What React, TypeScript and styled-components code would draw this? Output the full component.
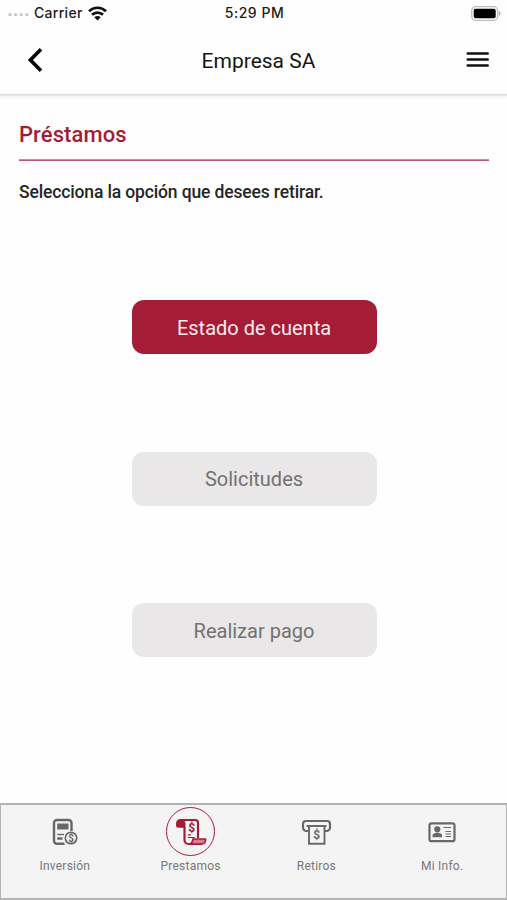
import React from "react";
import styled, { createGlobalStyle } from "styled-components";

const GlobalStyle = createGlobalStyle`
  * { box-sizing: border-box; }
  body { margin: 0; background: #fff; font-family: Roboto, sans-serif; }
`;

const Screen = styled.div`
  display: flex;
  flex-direction: column;
  width: 507px;
  height: 900px;
  overflow: hidden;
  background: #fefefe;
`;

const StatusBar = styled.div`
  display: grid;
  grid-template-columns: 1fr auto 1fr;
  align-items: center;
  height: 26px;
  padding: 0 6px 0 8px;
  font: 500 14px/26px Inter, sans-serif;
  color: #1c1c1c;
`;

const StatusSide = styled.div<{ $end?: boolean }>`
  display: flex;
  align-items: center;
  justify-content: ${(p) => (p.$end ? "flex-end" : "flex-start")};
`;

const Carrier = styled.span`
  margin: 0 5px 0 5px;
  letter-spacing: 0.3px;
`;

const Clock = styled.span`
  letter-spacing: 0.5px;
`;

const Header = styled.header`
  display: grid;
  grid-template-columns: 1fr auto 1fr;
  align-items: center;
  height: 68px;
  flex: none;
  padding: 0 17px 0 27px;
  box-shadow: 0 1px 0 #dcdcdc, 0 2px 0 #e4e4e4, 0 4px 3px rgba(0, 0, 0, 0.05);
`;

const IconButton = styled.button<{ $end?: boolean }>`
  display: flex;
  justify-self: ${(p) => (p.$end ? "end" : "start")};
  padding: 0;
  border: 0;
  background: none;
`;

const HeaderTitle = styled.h1`
  margin: 1px 0 0;
  font-size: 21px;
  font-weight: 400;
  line-height: 24px;
  color: #161616;
`;

const Content = styled.main`
  flex: 1;
  padding: 26px 18px 0 19px;
`;

const SectionTitle = styled.h2`
  margin: 0;
  padding-top: 1px;
  font-size: 22px;
  font-weight: 500;
  line-height: 28px;
  letter-spacing: 0.08px;
  color: #a31c38;
`;

const Rule = styled.div`
  height: 2px;
  margin-top: 10px;
  background: linear-gradient(#d0899a 50%, #bd5a70 50%);
`;

const Hint = styled.p`
  margin: 20px 0 0;
  font-size: 17.5px;
  font-weight: 500;
  line-height: 22px;
  letter-spacing: -0.14px;
  color: #262626;
`;

const Options = styled.div`
  display: flex;
  flex-direction: column;
  align-items: center;
  gap: 97.5px;
  margin-top: 97px;
`;

const OptionButton = styled.button<{ $primary?: boolean }>`
  width: 245px;
  height: 54px;
  padding: 1px 0 0;
  border: 0;
  border-radius: 12px;
  background: ${(p) => (p.$primary ? "#a51c36" : "#e9e7e8")};
  color: ${(p) => (p.$primary ? "#fbeaec" : "#727272")};
  font: 400 20px/24px Roboto, sans-serif;
`;

const TabBar = styled.nav`
  display: grid;
  grid-template-columns: repeat(4, 125.8px);
  justify-content: center;
  height: 97px;
  border: 2px solid #b2b2b2;
  border-left-width: 1px;
  border-right-width: 1px;
  background: #f4f4f4;
`;

const Tab = styled.a`
  display: flex;
  flex-direction: column;
  align-items: center;
  padding-top: 2px;
  font-size: 12px;
  line-height: 16px;
  letter-spacing: 0.22px;
  color: #777;
`;

const TabIcon = styled.span<{ $active?: boolean }>`
  display: flex;
  align-items: center;
  justify-content: center;
  width: 49px;
  height: 49px;
  margin-bottom: 2px;
  border: 1px solid ${(p) => (p.$active ? "#a51c36" : "transparent")};
  border-radius: 50%;
  color: ${(p) => (p.$active ? "#a51c36" : "#686868")};
`;

const Dollar = ({ x, y, size }: { x: number; y: number; size: number }) => (
  <text x={x} y={y} fontSize={size} fontWeight="700" fontFamily="Roboto, sans-serif" letterSpacing="0" textAnchor="middle" fill="currentColor">$</text>
);

const SignalDots = () => (
  <svg width="21" height="6" viewBox="0 0 21 6" fill="#c8c8c8">
    {[2, 7.6, 13.2, 18.8].map((x) => <circle key={x} cx={x} cy="5" r="1.7" transform="translate(0 -.3)" />)}
  </svg>
);

const WifiIcon = () => (
  <svg width="19" height="15" viewBox="0 0 19 15" fill="none" stroke="#111" strokeWidth="2.7">
    <path d="M1 5.200C5.800.6 13.200.6 18 5.200M4 8.800c3-3 8-3 11 0" />
    <path d="M6.300 11.300c1.800-1.600 4.600-1.600 6.400 0l-3.200 3.200z" fill="#111" stroke="none" />
  </svg>
);

const BatteryIcon = () => (
  <svg width="30" height="15" viewBox="0 0 30 15">
    <rect x=".7" y=".7" width="26" height="13.6" rx="4" fill="#fff" stroke="#bdbdbd" strokeWidth="1.3" />
    <rect x="2.7" y="2.8" width="22" height="9.4" rx="2" fill="#000" />
    <path d="M28 5.2c2 .7 2 3.9 0 4.6z" fill="#aaa" />
  </svg>
);

const BackIcon = () => (
  <svg width="16" height="24" viewBox="0 0 16 24" fill="none" stroke="#090909" strokeWidth="3.7">
    <path d="M14 1.3 3.4 12 14 22.7" />
  </svg>
);

const MenuIcon = () => (
  <svg width="24" height="18" viewBox="0 0 24 18" fill="none" stroke="#111" strokeWidth="2.5" strokeLinecap="round">
    <path d="M1.700 2.500h20M1.700 8.500h20M1.700 14.500h20" />
  </svg>
);

const InvestIcon = () => (
  <svg width="26" height="28" viewBox="0 0 26 28" fill="none" stroke="currentColor">
    <path d="M12.500 25.700H5a3 3 0 0 1-3-3V5a3 3 0 0 1 3-3h11.500a3 3 0 0 1 3 3v8" strokeWidth="2.400" />
    <path d="M5.200 5.500h11.300v6H5.200z" fill="currentColor" stroke="none" />
    <path d="M5.200 16.500H12" strokeWidth="1.400" />
    <path d="M5.200 20.500h5.300" strokeWidth="2.500" />
    <circle cx="19" cy="20" r="5.700" strokeWidth="1.700" />
    <g stroke="none"><Dollar x={19} y={23.5} size={10} /></g>
  </svg>
);

const LoanIcon = () => (
  <svg width="32" height="28" viewBox="0 0 32 28" fill="none" stroke="currentColor" strokeWidth="2.200">
    <path d="M4.500 2H20a3 3 0 0 1 3 3v15" />
    <path d="M9.500 9v13a4 4 0 0 0 4 4h13" />
    <path d="M1 5.500a4.500 4.500 0 0 1 4.500-4.500H9l1.500 4.500v4.300h-7A2.500 2.500 0 0 1 1 7.300z" fill="currentColor" stroke="none" />
    <path d="M14.500 26c2.500 0 3-2.500 3.500-5h12.500c.5 3-1 5-3.600 5z" fill="#cf8292" strokeWidth="1.600" />
    <path d="M12.800 16.800h3.200M12.800 19.500h7" strokeWidth="1.200" />
    <g stroke="none"><Dollar x={16.8} y={13.9} size={12} /></g>
  </svg>
);

const WithdrawIcon = () => (
  <svg width="31" height="26" viewBox="0 0 31 26" fill="none" stroke="currentColor" strokeWidth="2.200">
    <path d="M7 12H5.500A3.500 3.500 0 0 1 2 8.500V5a3 3 0 0 1 3-3h21a3 3 0 0 1 3 3v3.500A3.500 3.500 0 0 1 25.500 12H24" />
    <path d="M5.500 7h20M8 7v17.700h15.500V7" strokeWidth="1.900" />
    <g stroke="none"><Dollar x={15.7} y={20} size={12} /></g>
  </svg>
);

const InfoIcon = () => (
  <svg width="28" height="22" viewBox="0 -1 28 22" fill="none" stroke="currentColor">
    <rect x="1.500" y="1.300" width="25" height="17.900" rx="2" strokeWidth="2.200" />
    <circle cx="9.300" cy="7.300" r="3.100" fill="currentColor" stroke="none" />
    <path d="M4.500 15.300v-1.500c0-2.200 2-3 4.800-3s4.800.8 4.800 3v1.500z" fill="currentColor" stroke="none" />
    <path d="M15.500 5.500h7.500M17.500 9.500h5.500M17.500 12h5.500M17.500 14.500h5.500" strokeWidth="1.200" />
  </svg>
);

const options = ["Estado de cuenta", "Solicitudes", "Realizar pago"];
const tabs = [
  { label: "Inversión", Icon: InvestIcon },
  { label: "Prestamos", Icon: LoanIcon },
  { label: "Retiros", Icon: WithdrawIcon },
  { label: "Mi Info.", Icon: InfoIcon },
];

export default function App() {
  return (
    <>
      <GlobalStyle />
      <Screen>
        <StatusBar>
          <StatusSide><SignalDots /><Carrier>Carrier</Carrier><WifiIcon /></StatusSide>
          <Clock>5:29 PM</Clock>
          <StatusSide $end><BatteryIcon /></StatusSide>
        </StatusBar>
        <Header>
          <IconButton aria-label="Volver"><BackIcon /></IconButton>
          <HeaderTitle>Empresa SA</HeaderTitle>
          <IconButton $end aria-label="Menú"><MenuIcon /></IconButton>
        </Header>
        <Content>
          <SectionTitle>Préstamos</SectionTitle>
          <Rule />
          <Hint>Selecciona la opción que desees retirar.</Hint>
          <Options>
            {options.map((label, i) => <OptionButton key={label} $primary={i === 0}>{label}</OptionButton>)}
          </Options>
        </Content>
        <TabBar>
          {tabs.map(({ label, Icon }, i) => (
            <Tab key={label}><TabIcon $active={i === 1}><Icon /></TabIcon>{label}</Tab>
          ))}
        </TabBar>
      </Screen>
    </>
  );
}
